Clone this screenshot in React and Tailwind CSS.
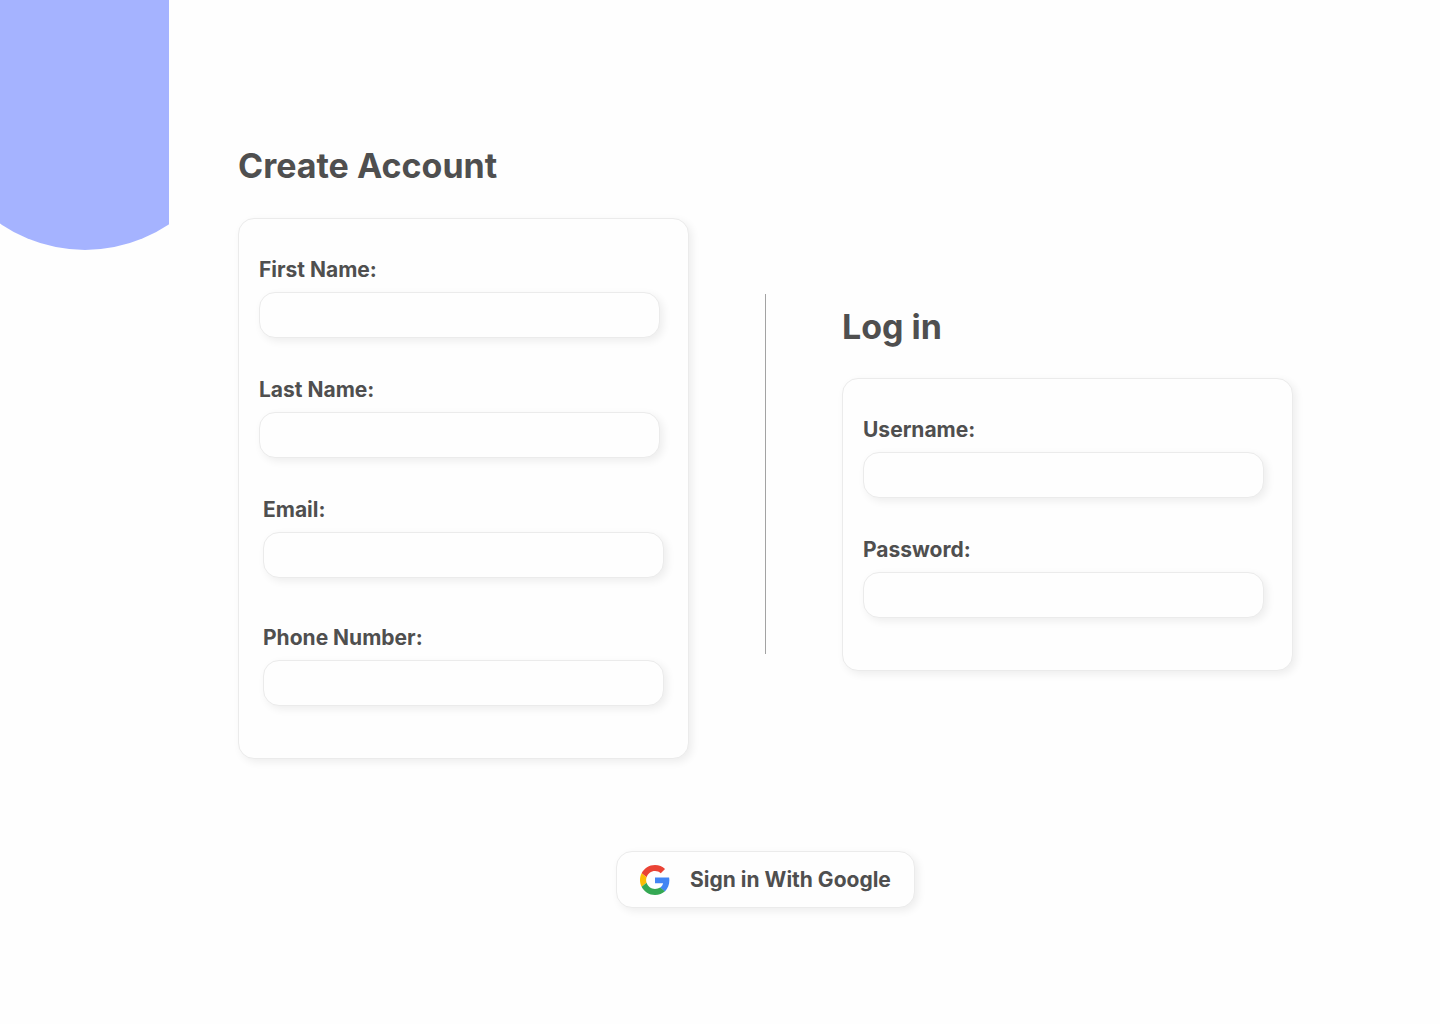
import React, { useState } from 'react';

const GoogleLogo = () => (
  <svg viewBox="0 0 48 48" className="size-[30px] shrink-0" aria-hidden="true">
    <path fill="#EA4335" d="M24 9.5c3.54 0 6.71 1.22 9.21 3.6l6.85-6.85C35.9 2.38 30.47 0 24 0 14.62 0 6.51 5.38 2.56 13.22l7.98 6.19C12.43 13.72 17.74 9.5 24 9.5z" />
    <path fill="#4285F4" d="M46.98 24.55c0-1.57-.15-3.09-.38-4.55H24v9.02h12.94c-.58 2.96-2.26 5.48-4.78 7.18l7.73 6c4.51-4.18 7.09-10.36 7.09-17.65z" />
    <path fill="#FBBC05" d="M10.53 28.59c-.48-1.45-.76-2.99-.76-4.59s.27-3.14.76-4.59l-7.98-6.19C.92 16.46 0 20.12 0 24c0 3.88.92 7.54 2.56 10.78l7.97-6.19z" />
    <path fill="#34A853" d="M24 48c6.48 0 11.93-2.13 15.89-5.81l-7.73-6c-2.15 1.45-4.92 2.3-8.16 2.3-6.26 0-11.57-4.22-13.47-9.91l-7.98 6.19C6.51 42.62 14.62 48 24 48z" />
  </svg>
);

const Field = ({ id, label, type = 'text', value, onChange }) => (
  <div className="flex flex-col gap-2">
    <label htmlFor={id} className="text-[21px] leading-7">{label}</label>
    <input
      id={id}
      name={id}
      type={type}
      value={value}
      onChange={onChange}
      className="h-[46px] w-full rounded-2xl border border-[#ebebeb] bg-[#fefefe] px-4 text-base font-normal shadow-[3px_3px_8px_rgba(0,0,0,0.07)] outline-none focus:border-[#a5b3ff]"
    />
  </div>
);

const App = () => {
  const [form, setForm] = useState({
    firstName: '',
    lastName: '',
    email: '',
    phone: '',
    username: '',
    password: '',
  });

  const handleChange = (e) => {
    setForm({ ...form, [e.target.name]: e.target.value });
  };

  return (
    <div className="flex min-h-screen bg-[#fefefe] font-['Inter',sans-serif] font-bold text-[#4f4f4f]">
      {/* circle cut off by the side column */}
      <div className="flex h-[250px] w-[169px] shrink-0 items-end justify-center overflow-hidden">
        <div className="size-[300px] shrink-0 rounded-full bg-[#a5b3ff]" />
      </div>

      <main className="flex flex-1 flex-col items-center pt-[146px] pr-[147px] pb-12 pl-[69px]">
        <div className="grid w-full grid-cols-[1fr_1px_1fr] items-start gap-19">
          <section>
            <h1 className="text-[34px] leading-10">Create Account</h1>
            <form className="mt-8 flex flex-col gap-[38px] rounded-2xl border border-[#ebebeb] bg-[#fefefe] pt-[37px] pb-[52px] shadow-[3px_3px_8px_rgba(0,0,0,0.07)]">
              <div className="flex flex-col gap-[38px] pr-7 pl-5">
                <Field id="firstName" label="First Name:" value={form.firstName} onChange={handleChange} />
                <Field id="lastName" label="Last Name:" value={form.lastName} onChange={handleChange} />
              </div>
              <div className="flex flex-col gap-[46px] px-6">
                <Field id="email" label="Email:" type="email" value={form.email} onChange={handleChange} />
                <Field id="phone" label="Phone Number:" type="tel" value={form.phone} onChange={handleChange} />
              </div>
            </form>
          </section>

          <div className="mt-[148px] h-[360px] bg-[#a3a3a3]" />

          <section className="pt-[161px]">
            <h1 className="text-[34px] leading-10">Log in</h1>
            <form className="mt-[31px] flex flex-col gap-[38px] rounded-2xl border border-[#ebebeb] bg-[#fefefe] pt-[37px] pr-7 pb-[52px] pl-5 shadow-[3px_3px_8px_rgba(0,0,0,0.07)]">
              <Field id="username" label="Username:" value={form.username} onChange={handleChange} />
              <Field id="password" label="Password:" type="password" value={form.password} onChange={handleChange} />
            </form>
          </section>
        </div>

        <button
          type="button"
          className="mt-23 flex h-[57px] cursor-pointer items-center gap-5 rounded-2xl border border-[#ebebeb] bg-[#fefefe] px-[23px] text-[21px] shadow-[3px_3px_8px_rgba(0,0,0,0.07)]"
        >
          <GoogleLogo />
          Sign in With Google
        </button>
      </main>
    </div>
  );
};

export default App;
